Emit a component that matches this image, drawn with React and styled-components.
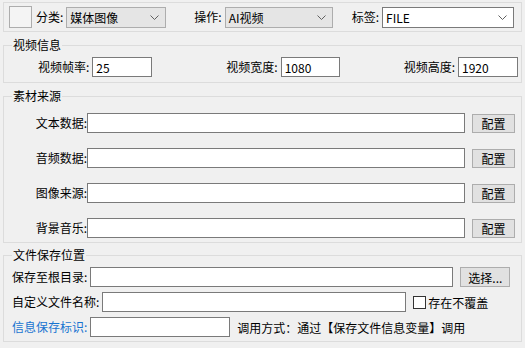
import React from "react";
import styled, { createGlobalStyle } from "styled-components";

const GlobalStyle = createGlobalStyle`
  html, body {
    margin: 0;
    padding: 0;
    background: #f0f0f0;
  }
  body {
    font-family: "Noto Sans CJK SC", "Microsoft YaHei", sans-serif;
    font-size: 12px;
    color: #000;
  }
`;

const sources = ["文本数据", "音频数据", "图像来源", "背景音乐"];

export default function App() {
  return (
    <>
      <GlobalStyle />
      <Page>
        <TopBar>
          <ColorButton />
          <Label $left={4}>分类:</Label>
          <Combo $width={100} $gray>
            <span>媒体图像</span>
            <Chevron />
          </Combo>
          <Label $left={28}>操作:</Label>
          <Combo $width={108} $gray>
            <span>AI视频</span>
            <Chevron />
          </Combo>
          <Label $left={19}>标签:</Label>
          <Combo $width={132}>
            <span>FILE</span>
            <Chevron />
          </Combo>
        </TopBar>

        <Group $pad="4px 3px 5px 8px">
          <Legend>视频信息</Legend>
          <InfoRow>
            <Field>
              <Label>视频帧率:</Label>
              <TextInput $width={60} defaultValue="25" />
            </Field>
            <Field $shift={10}>
              <Label>视频宽度:</Label>
              <TextInput $width={59} defaultValue="1080" />
            </Field>
            <Field>
              <Label>视频高度:</Label>
              <TextInput $width={60} defaultValue="1920" />
            </Field>
          </InfoRow>
        </Group>

        <Group $pad="9px 5px 4px 8px" $top={5}>
          <Legend>素材来源</Legend>
          <SourceGrid>
            {sources.map((s) => (
              <React.Fragment key={s}>
                <GridLabel>{s}:</GridLabel>
                <TextInput $width={378} />
                <Button $width={43} $height={19}>配置</Button>
              </React.Fragment>
            ))}
          </SourceGrid>
        </Group>

        <Group $pad="4px 5px 4px 8px" $top={4}>
          <Legend>文件保存位置</Legend>
          <SaveRows>
            <Row>
              <Label>保存至根目录:</Label>
              <TextInput $width={363} />
              <Button $width={50} $height={20} $left={7}>选择...</Button>
            </Row>
            <Row>
              <Label>自定义文件名称:</Label>
              <TextInput $width={304} />
              <Check>
                <CheckBox />
                存在不覆盖
              </Check>
            </Row>
            <Row>
              <Label $blue>信息保存标识:</Label>
              <TextInput $width={140} />
              <Hint>调用方式：通过【保存文件信息变量】调用</Hint>
            </Row>
          </SaveRows>
        </Group>
      </Page>
    </>
  );
}

function Chevron() {
  return (
    <ChevronIcon width="9" height="5" viewBox="0 0 9 5">
      <polyline points="0.5,0.5 4.5,4.5 8.5,0.5" fill="none" stroke="#606060" strokeWidth="1" />
    </ChevronIcon>
  );
}

const Page = styled.div`
  display: flex;
  flex-direction: column;
  padding: 2px 3px 0 3px;
  width: 525px;
  box-sizing: border-box;
`;

const TopBar = styled.div`
  display: flex;
  align-items: center;
  height: 28px;
  border: 1px solid #dcdcdc;
  padding-left: 5px;
`;

const ColorButton = styled.div`
  width: 21px;
  height: 20px;
  background: #f4f4f4;
  border: 1px solid #adadad;
`;

const Label = styled.span`
  margin-left: ${(p) => p.$left || 0}px;
  margin-right: 3px;
  white-space: nowrap;
  line-height: 20px;
  color: ${(p) => (p.$blue ? "#1874d0" : "#000")};
`;

const Combo = styled.div`
  display: flex;
  align-items: center;
  justify-content: space-between;
  box-sizing: border-box;
  width: ${(p) => p.$width}px;
  height: 21px;
  padding: 0 6px 0 3px;
  background: ${(p) => (p.$gray ? "#e5e5e5" : "#fff")};
  border: 1px solid ${(p) => (p.$gray ? "#adadad" : "#7a7a7a")};
`;

const ChevronIcon = styled.svg`
  display: block;
`;

const Group = styled.fieldset`
  margin: ${(p) => p.$top || 5}px 0 0 0;
  padding: ${(p) => p.$pad};
  border: 1px solid #dcdcdc;
  min-width: 0;
`;

const Legend = styled.legend`
  padding: 0 1px;
  line-height: 16px;
`;

const InfoRow = styled.div`
  display: flex;
  justify-content: space-between;
  padding-left: 26px;
`;

const Field = styled.div`
  display: flex;
  align-items: center;
  margin-left: ${(p) => p.$shift || 0}px;
`;

const TextInput = styled.input`
  box-sizing: border-box;
  width: ${(p) => p.$width}px;
  height: 20px;
  margin: 0 0 0 ${(p) => p.$left || 0}px;
  padding: 0 3px;
  border: 1px solid #7a7a7a;
  background: #fff;
  font: inherit;
  color: #000;
  outline: none;
`;

const SourceGrid = styled.div`
  display: grid;
  grid-template-columns: 75px 378px 43px;
  column-gap: 0;
  row-gap: 15px;
  align-items: center;
  & > button {
    margin-left: 7px;
  }
`;

const GridLabel = styled.span`
  text-align: right;
  line-height: 20px;
  white-space: nowrap;
`;

const Button = styled.button`
  box-sizing: border-box;
  width: ${(p) => p.$width}px;
  height: ${(p) => p.$height}px;
  margin-left: ${(p) => p.$left || 0}px;
  padding: 0;
  background: #e1e1e1;
  border: 1px solid #adadad;
  font: inherit;
  color: #000;
`;

const SaveRows = styled.div`
  display: flex;
  flex-direction: column;
  gap: 5px;
`;

const Row = styled.div`
  display: flex;
  align-items: center;
`;

const Check = styled.label`
  display: flex;
  align-items: center;
  margin-left: 7px;
  gap: 2px;
  white-space: nowrap;
`;

const CheckBox = styled.span`
  width: 13px;
  height: 13px;
  box-sizing: border-box;
  border: 1px solid #333;
  background: #fff;
`;

const Hint = styled.span`
  margin-left: 7px;
  white-space: nowrap;
`;
